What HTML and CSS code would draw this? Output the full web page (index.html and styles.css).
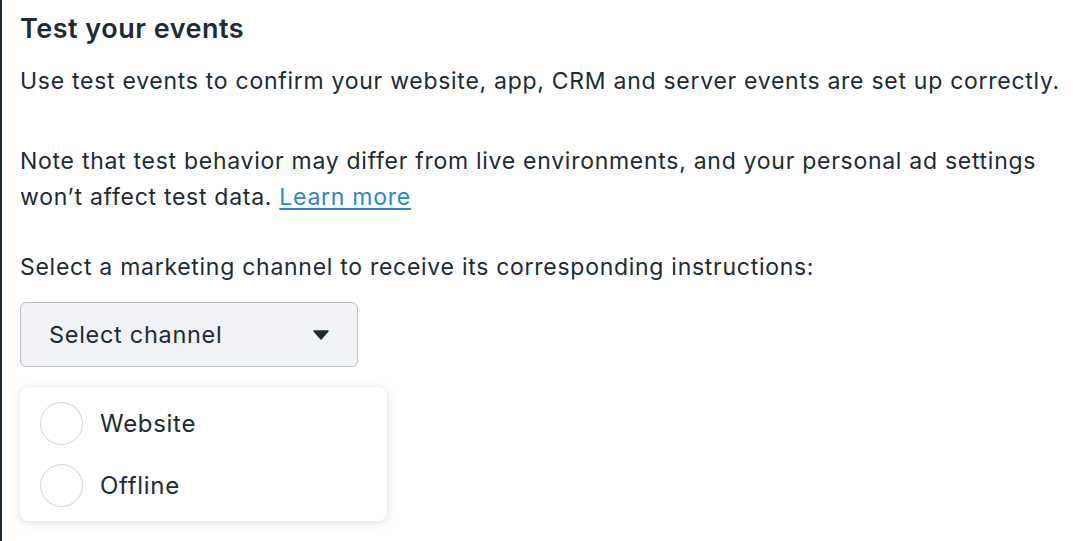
FILE: index.html
```html
<!DOCTYPE html>
<html>
<head>
<meta charset="utf-8">
<link rel="stylesheet" href="styles.css">
</head>
<body>
<div class="panel">
  <h1 class="title">Test your events</h1>
  <p class="text">Use test events to confirm your website, app, CRM and server events are set up correctly.</p>
  <p class="text note">Note that test behavior may differ from live environments, and your personal ad settings won’t affect test data. <a class="link" href="#">Learn more</a></p>
  <p class="text prompt">Select a marketing channel to receive its corresponding instructions:</p>
  <div class="select">
    <span class="select-label">Select channel</span>
    <svg class="caret" width="16" height="10" viewBox="0 0 16 10"><path d="M1 1 H15 L8 9 Z" fill="#1c2b33" stroke="#1c2b33" stroke-width="1.5" stroke-linejoin="round"/></svg>
  </div>
  <div class="menu">
    <div class="option"><span class="radio"></span><span class="option-label">Website</span></div>
    <div class="option"><span class="radio"></span><span class="option-label">Offline</span></div>
  </div>
</div>
</body>
</html>
```
FILE: styles.css
```css
html, body {
  margin: 0;
  padding: 0;
  background: #ffffff;
}
body {
  font-family: Inter, "Noto Sans", sans-serif;
  color: #1c2b33;
}
.panel {
  border-left: 2px solid #1c2b33;
  height: 541px;
  box-sizing: border-box;
  padding: 12px 0 0 18px;
  display: flex;
  flex-direction: column;
  align-items: flex-start;
}
.title {
  margin: 0;
  font-size: 27px;
  line-height: 34px;
  font-weight: 600;
  letter-spacing: 0.5px;
}
.text {
  margin: 0;
  font-size: 23px;
  line-height: 36px;
  letter-spacing: 0.72px;
  max-width: 1058px;
}
.title + .text {
  margin-top: 17px;
}
.note {
  margin-top: 44px;
}
.prompt {
  margin-top: 34px;
}
.link {
  color: #2a86d1;
  text-decoration: underline;
  text-underline-offset: 3px;
}
.select {
  margin-top: 17px;
  width: 338px;
  height: 65px;
  box-sizing: border-box;
  border: 1.5px solid #bcc0c4;
  border-radius: 6px;
  background: #f0f2f5;
  display: flex;
  align-items: center;
  justify-content: space-between;
  padding: 0 28px 0 28px;
  font-size: 23.5px;
  letter-spacing: 0.7px;
}
.menu {
  margin-top: 20px;
  width: 367px;
  box-sizing: border-box;
  padding: 5px 0;
  background: #ffffff;
  border-radius: 8px;
  box-shadow: 0 2px 10px rgba(0, 0, 0, 0.12), 0 0 2px rgba(0,0,0,0.06);
}
.option {
  display: flex;
  align-items: center;
  height: 62px;
  padding-left: 20px;
  font-size: 24px;
  letter-spacing: 0.7px;
}
.radio {
  width: 43px;
  height: 43px;
  border: 1.5px solid #d0d3d6;
  border-radius: 50%;
  margin-right: 17px;
  box-sizing: border-box;
}
```
